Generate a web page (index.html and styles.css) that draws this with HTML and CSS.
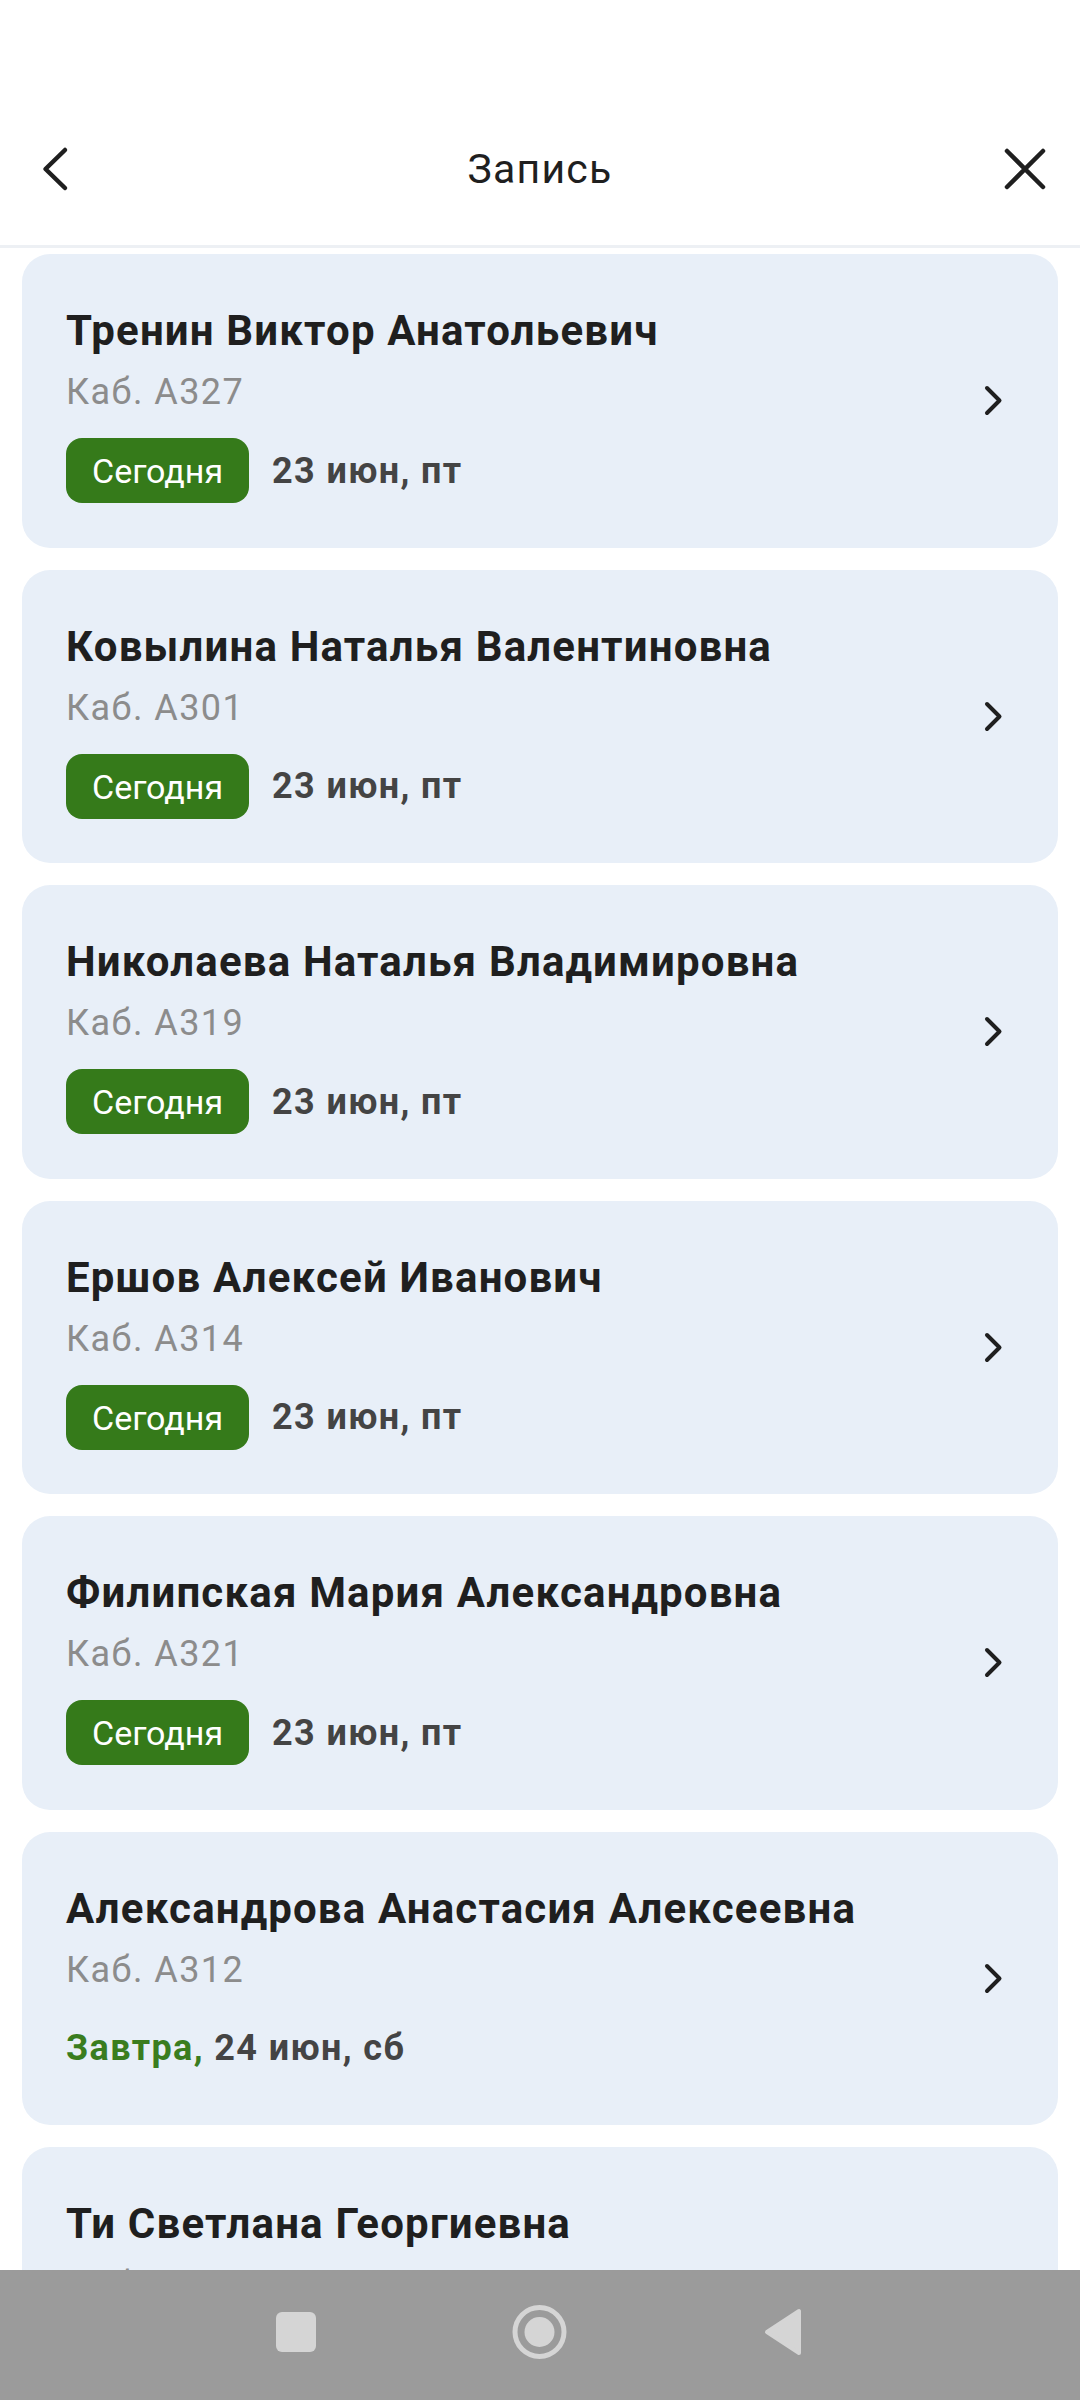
FILE: index.html
```html
<!DOCTYPE html>
<html lang="ru">
<head>
<meta charset="utf-8">
<title>Запись</title>
<link rel="stylesheet" href="styles.css">
</head>
<body>
<div class="status"></div>
<header class="toolbar">
  <svg class="tb-icon" viewBox="0 0 48 48" width="48" height="48"><path d="M34 5 L14.5 24 L34 43" fill="none" stroke="#1f1f1f" stroke-width="4.5" stroke-linecap="round" stroke-linejoin="round"/></svg>
  <div class="title">Запись</div>
  <svg class="tb-icon" viewBox="0 0 48 48" width="48" height="48"><path d="M6 6 L42 42 M42 6 L6 42" fill="none" stroke="#1f1f1f" stroke-width="4.5" stroke-linecap="round"/></svg>
</header>
<main class="list">
  <div class="card">
    <div class="info">
      <div class="name">Тренин Виктор Анатольевич</div>
      <div class="room">Каб. А327</div>
      <div class="when"><span class="badge">Сегодня</span><span class="date">23 июн, пт</span></div>
    </div>
    <svg class="chev" viewBox="0 0 20 31" width="20" height="31"><path d="M3 3 L15.5 15.5 L3 28" fill="none" stroke="#1f1f1f" stroke-width="4" stroke-linecap="round" stroke-linejoin="round"/></svg>
  </div>
  <div class="card">
    <div class="info">
      <div class="name">Ковылина Наталья Валентиновна</div>
      <div class="room">Каб. А301</div>
      <div class="when"><span class="badge">Сегодня</span><span class="date">23 июн, пт</span></div>
    </div>
    <svg class="chev" viewBox="0 0 20 31" width="20" height="31"><path d="M3 3 L15.5 15.5 L3 28" fill="none" stroke="#1f1f1f" stroke-width="4" stroke-linecap="round" stroke-linejoin="round"/></svg>
  </div>
  <div class="card">
    <div class="info">
      <div class="name">Николаева Наталья Владимировна</div>
      <div class="room">Каб. А319</div>
      <div class="when"><span class="badge">Сегодня</span><span class="date">23 июн, пт</span></div>
    </div>
    <svg class="chev" viewBox="0 0 20 31" width="20" height="31"><path d="M3 3 L15.5 15.5 L3 28" fill="none" stroke="#1f1f1f" stroke-width="4" stroke-linecap="round" stroke-linejoin="round"/></svg>
  </div>
  <div class="card">
    <div class="info">
      <div class="name">Ершов Алексей Иванович</div>
      <div class="room">Каб. А314</div>
      <div class="when"><span class="badge">Сегодня</span><span class="date">23 июн, пт</span></div>
    </div>
    <svg class="chev" viewBox="0 0 20 31" width="20" height="31"><path d="M3 3 L15.5 15.5 L3 28" fill="none" stroke="#1f1f1f" stroke-width="4" stroke-linecap="round" stroke-linejoin="round"/></svg>
  </div>
  <div class="card">
    <div class="info">
      <div class="name">Филипская Мария Александровна</div>
      <div class="room">Каб. А321</div>
      <div class="when"><span class="badge">Сегодня</span><span class="date">23 июн, пт</span></div>
    </div>
    <svg class="chev" viewBox="0 0 20 31" width="20" height="31"><path d="M3 3 L15.5 15.5 L3 28" fill="none" stroke="#1f1f1f" stroke-width="4" stroke-linecap="round" stroke-linejoin="round"/></svg>
  </div>
  <div class="card">
    <div class="info">
      <div class="name">Александрова Анастасия Алексеевна</div>
      <div class="room">Каб. А312</div>
      <div class="when"><span class="date"><span class="green">Завтра,</span> 24 июн, сб</span></div>
    </div>
    <svg class="chev" viewBox="0 0 20 31" width="20" height="31"><path d="M3 3 L15.5 15.5 L3 28" fill="none" stroke="#1f1f1f" stroke-width="4" stroke-linecap="round" stroke-linejoin="round"/></svg>
  </div>
  <div class="card">
    <div class="info">
      <div class="name">Ти Светлана Георгиевна</div>
      <div class="room">Каб. А316</div>
      <div class="when"><span class="date"><span class="green">Завтра,</span> 24 июн, сб</span></div>
    </div>
    <svg class="chev" viewBox="0 0 20 31" width="20" height="31"><path d="M3 3 L15.5 15.5 L3 28" fill="none" stroke="#1f1f1f" stroke-width="4" stroke-linecap="round" stroke-linejoin="round"/></svg>
  </div>
</main>
<nav class="navbar">
  <svg class="nav-icon" viewBox="0 0 80 80" width="80" height="80"><rect x="20" y="20" width="40" height="40" rx="6" fill="#d5d5d5"/></svg>
  <svg class="nav-icon" viewBox="0 0 80 80" width="80" height="80"><circle cx="39.5" cy="40" r="24.5" fill="none" stroke="#d5d5d5" stroke-width="5"/><circle cx="39.5" cy="40" r="15" fill="#d5d5d5"/></svg>
  <svg class="nav-icon" viewBox="0 0 80 80" width="80" height="80"><path d="M23 40 L55 19 L55 61 Z" fill="#d5d5d5" stroke="#d5d5d5" stroke-width="4" stroke-linejoin="round"/></svg>
</nav>
</body>
</html>
```
FILE: styles.css
```css
html, body {
  margin: 0;
  padding: 0;
  background: #ffffff;
  font-family: Roboto, "Noto Sans", sans-serif;
  color: #1f1f1f;
}

.status {
  height: 93px;
}

.toolbar {
  height: 152px;
  display: flex;
  align-items: center;
  padding: 0 31px;
  border-bottom: 3px solid #edf0f4;
}

.tb-icon {
  flex: none;
  display: block;
}

.title {
  flex: 1;
  text-align: center;
  font-size: 41px;
  font-weight: 400;
  letter-spacing: 0.03em;
  color: #1f1f1f;
  line-height: 50px;
}

.list {
  display: flex;
  flex-direction: column;
  gap: 22px;
  padding: 6px 22px 200px;
}

.card {
  background: #e8eff8;
  border-radius: 28px;
  display: flex;
  align-items: center;
  padding: 52px 54px 44.5px 44px;
}

.info {
  flex: 1;
  min-width: 0;
}

.name {
  font-size: 42px;
  font-weight: 700;
  letter-spacing: 0.028em;
  line-height: 50px;
  color: #1f1f1f;
  white-space: nowrap;
}

.room {
  margin-top: 14px;
  font-size: 36px;
  letter-spacing: 0.04em;
  line-height: 44px;
  color: #8c8c8c;
}

.when {
  margin-top: 24px;
  height: 65px;
  display: flex;
  align-items: center;
  gap: 23px;
}

.badge {
  height: 65px;
  line-height: 67px;
  padding: 0 26px;
  border-radius: 16px;
  background: #357a1a;
  color: #ffffff;
  font-size: 34px;
  box-sizing: border-box;
}

.date {
  font-size: 36px;
  font-weight: 700;
  letter-spacing: 0.038em;
  line-height: 44px;
  color: #444444;
}

.green {
  color: #3a7d1f;
}

.chev {
  flex: none;
  display: block;
  margin-bottom: 7.5px;
}

.navbar {
  position: fixed;
  left: 0;
  right: 0;
  bottom: 0;
  height: 130px;
  background: #9b9b9b;
  display: flex;
  justify-content: center;
  align-items: center;
  gap: 164px;
  padding-bottom: 6px;
  box-sizing: border-box;
}

.nav-icon {
  display: block;
  flex: none;
}
```
